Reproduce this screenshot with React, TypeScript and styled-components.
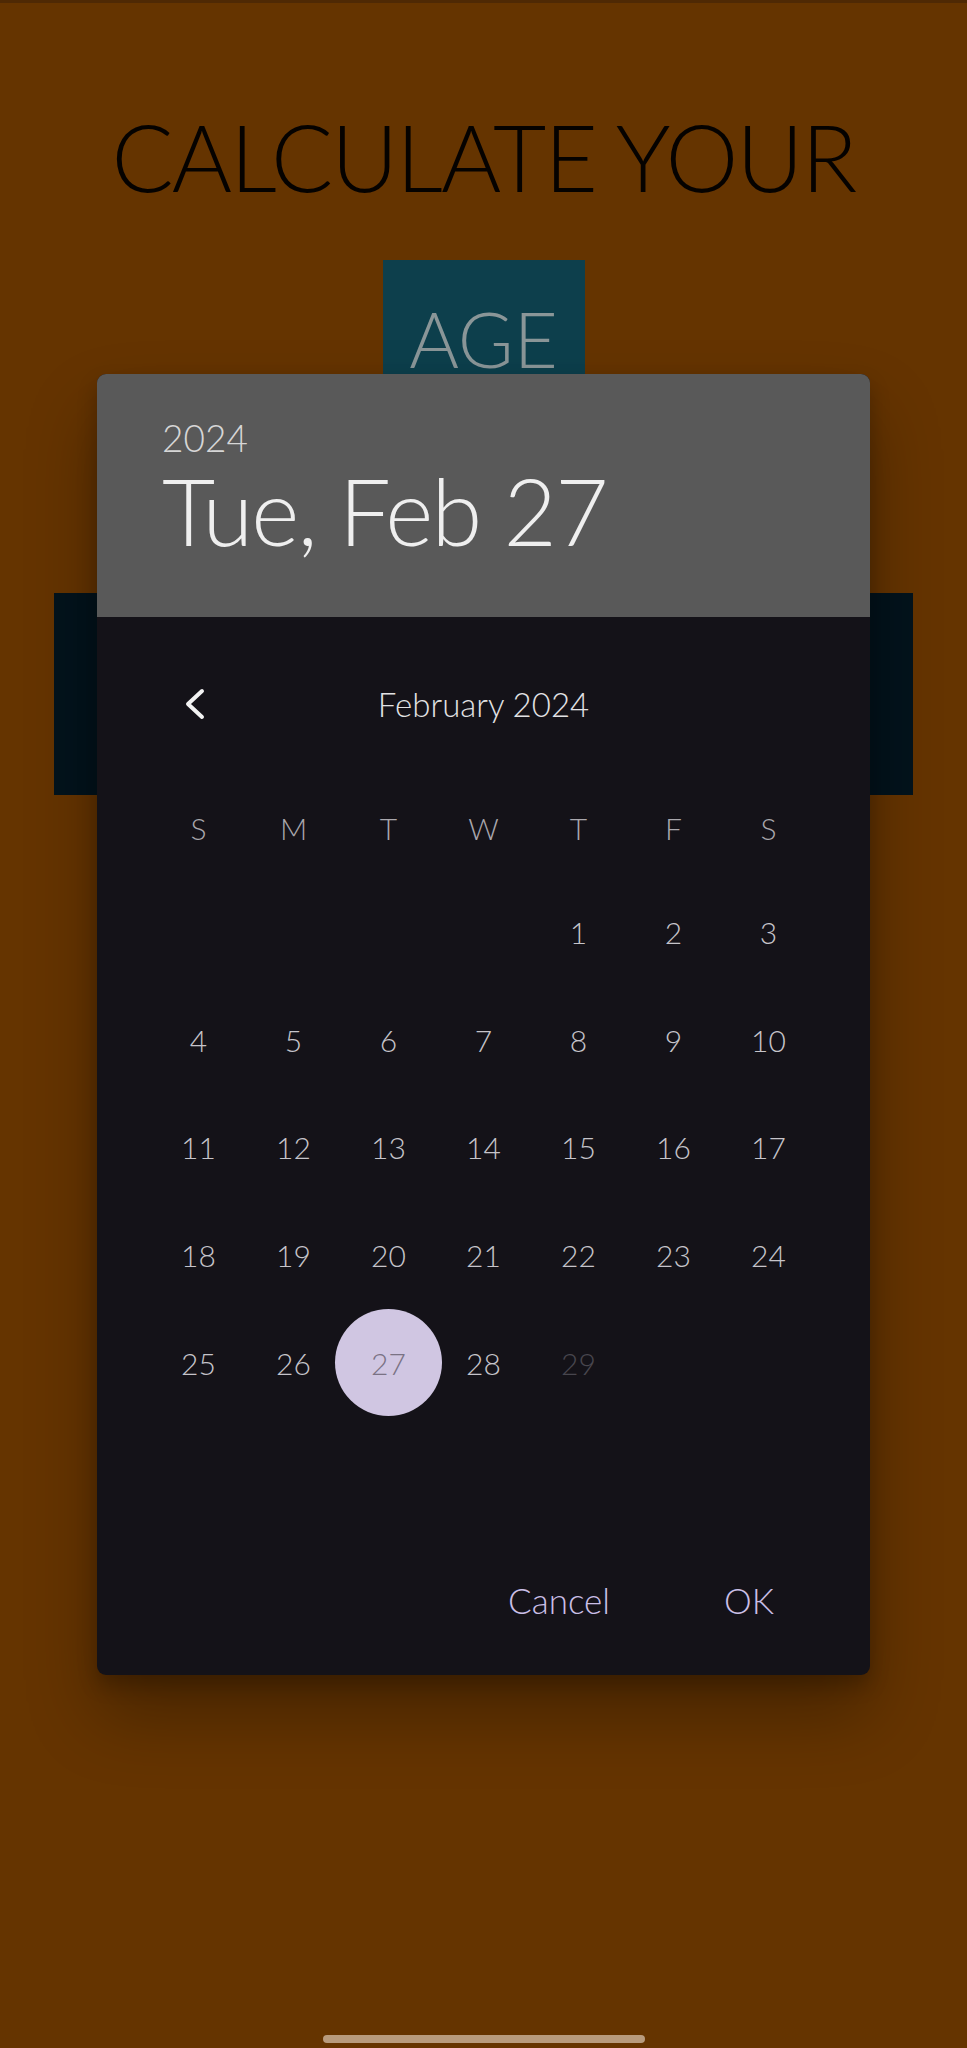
import React from "react";
import styled, { createGlobalStyle } from "styled-components";

const Global = createGlobalStyle`
  html, body { margin: 0; padding: 0; }
  body { background: #653400; font-family: Lato, "Open Sans", sans-serif; }
`;

const Page = styled.div`
  position: relative;
  min-height: 2048px;
  background: linear-gradient(#4f2904 0 3px, #653400 3px);
  display: flex;
  flex-direction: column;
  align-items: center;
  overflow: hidden;
`;

const Title = styled.h1`
  margin: 102px 0 0;
  font-family: Lato, sans-serif;
  font-weight: 300;
  font-size: 92px;
  line-height: 1.2;
  color: #050200;
  letter-spacing: -1.85px;
  white-space: nowrap;
`;

const AgeBox = styled.div`
  margin-top: 48px;
  width: 202px;
  height: 140px;
  background: #0d3f4c;
  box-sizing: border-box;
  padding-top: 33px;
  text-align: center;
  font-weight: 300;
  font-size: 76px;
  line-height: 1.2;
  color: #8a9698;
`;

const NavyBar = styled.div`
  margin-top: 193px;
  width: 859px;
  height: 202px;
  background: #03131c;
`;

const Overlay = styled.div`
  position: absolute;
  inset: 0;
  display: flex;
  align-items: center;
  justify-content: center;
`;

const Dialog = styled.div`
  width: 773px;
  height: 1301px;
  border-radius: 9px;
  overflow: hidden;
  background: #141218;
  display: flex;
  flex-direction: column;
  box-shadow: 0 40px 70px rgba(0, 0, 0, 0.3), 0 10px 20px rgba(0, 0, 0, 0.22);
`;

const Header = styled.div`
  height: 243px;
  background: #595959;
  box-sizing: border-box;
  padding: 42px 0 0 65px;
  display: flex;
  flex-direction: column;
`;

const Year = styled.div`
  font-weight: 300;
  font-size: 37px;
  line-height: 1.2;
  color: #d6d6d6;
`;

const BigDate = styled.div`
  margin-top: 5px;
  font-weight: 300;
  font-size: 92px;
  line-height: 1;
  color: #efefef;
  letter-spacing: -1.8px;
`;

const Body = styled.div`
  flex: 1;
  display: flex;
  flex-direction: column;
  padding: 41px 54px 35px;
`;

const NavRow = styled.div`
  position: relative;
  height: 92px;
  display: flex;
  align-items: center;
  justify-content: center;
`;

const NavButton = styled.button`
  position: absolute;
  left: 22px;
  top: 50%;
  transform: translateY(-50%);
  width: 44px;
  height: 44px;
  padding: 0;
  border: none;
  background: transparent;
  display: flex;
  align-items: center;
  justify-content: center;
`;

const MonthLabel = styled.div`
  font-weight: 300;
  font-size: 33px;
  color: #e2e2e4;
`;

const Grid = styled.div`
  margin-top: 29.4px;
  display: grid;
  grid-template-columns: repeat(7, minmax(0, 1fr));
  grid-template-rows: 99.2px repeat(6, 107.7px);
`;

const WeekDay = styled.div`
  display: flex;
  align-items: center;
  justify-content: center;
  font-weight: 300;
  font-size: 30px;
  color: #a9a7ad;
`;

const Day = styled.div`
  display: flex;
  align-items: center;
  justify-content: center;
  min-width: 0;
`;

const DayCircle = styled.div<{ $selected?: boolean; $dim?: boolean }>`
  flex-shrink: 0;
  width: 107px;
  height: 107px;
  border-radius: 50%;
  display: flex;
  align-items: center;
  justify-content: center;
  font-weight: 300;
  font-size: 30px;
  background: ${(p) => (p.$selected ? "#d0c6e2" : "transparent")};
  color: ${(p) => (p.$selected ? "#7a7284" : p.$dim ? "#48464e" : "#c6c4ca")};
`;

const Actions = styled.div`
  margin-top: auto;
  display: flex;
  justify-content: flex-end;
  align-items: center;
  gap: 66px;
  padding-right: 18px;
  height: 80px;
`;

const TextButton = styled.button`
  border: none;
  background: transparent;
  padding: 0 24px;
  font-family: Lato, sans-serif;
  font-weight: 300;
  font-size: 35px;
  color: #cabfe6;
`;

const HomeIndicator = styled.div`
  position: absolute;
  left: 50%;
  bottom: 5px;
  transform: translateX(-50%);
  width: 322px;
  height: 8px;
  border-radius: 4px;
  background: #b89b7d;
`;

const weekdays = ["S", "M", "T", "W", "T", "F", "S"];

export default function App() {
  const cells: (number | null)[] = [];
  for (let i = 0; i < 4; i++) cells.push(null);
  for (let d = 1; d <= 29; d++) cells.push(d);
  while (cells.length < 42) cells.push(null);

  return (
    <>
      <Global />
      <Page>
        <Title>CALCULATE YOUR</Title>
        <AgeBox>AGE</AgeBox>
        <NavyBar />
        <Overlay>
          <Dialog>
            <Header>
              <Year>2024</Year>
              <BigDate>Tue, Feb 27</BigDate>
            </Header>
            <Body>
              <NavRow>
                <NavButton aria-label="Previous month">
                  <svg width="24" height="34" viewBox="0 0 24 34">
                    <polyline
                      points="19,4 5,17 19,30"
                      fill="none"
                      stroke="#f2f2f2"
                      strokeWidth="4"
                      strokeLinecap="round"
                      strokeLinejoin="round"
                    />
                  </svg>
                </NavButton>
                <MonthLabel>February 2024</MonthLabel>
              </NavRow>
              <Grid>
                {weekdays.map((w, i) => (
                  <WeekDay key={"w" + i}>{w}</WeekDay>
                ))}
                {cells.map((d, i) => (
                  <Day key={i}>
                    {d !== null && (
                      <DayCircle $selected={d === 27} $dim={d === 29}>
                        {d}
                      </DayCircle>
                    )}
                  </Day>
                ))}
              </Grid>
              <Actions>
                <TextButton>Cancel</TextButton>
                <TextButton>OK</TextButton>
              </Actions>
            </Body>
          </Dialog>
        </Overlay>
        <HomeIndicator />
      </Page>
    </>
  );
}
